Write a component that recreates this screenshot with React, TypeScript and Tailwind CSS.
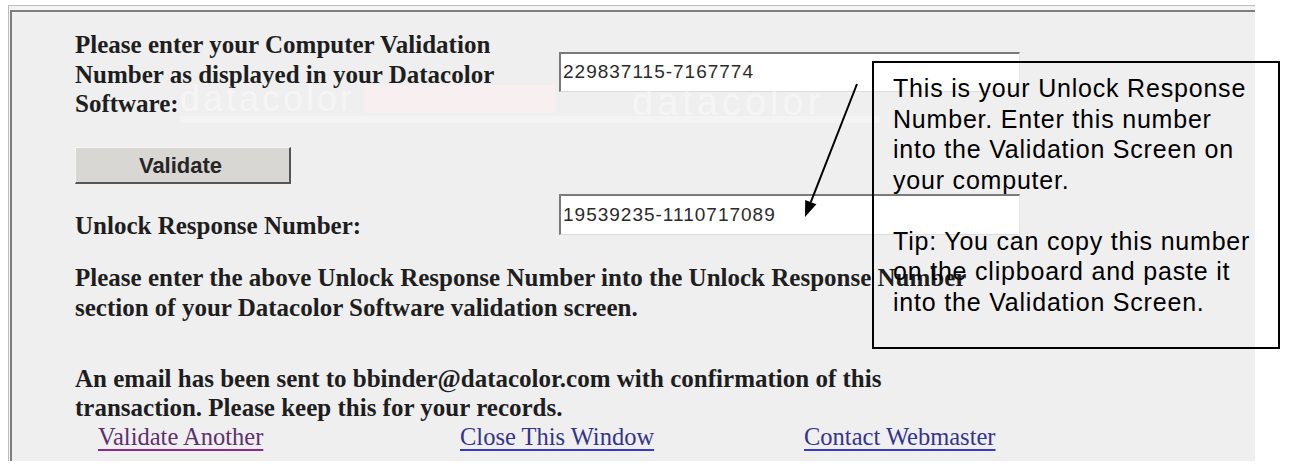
export default function App() {
  return (
    <div className="relative h-[467px] w-[1289px] overflow-hidden bg-white">
      {/* faint datacolor watermark in the page background */}
      <div className="pointer-events-none absolute left-[180px] top-[84px] flex items-center gap-[10px]">
        <span className="font-['Liberation_Sans',sans-serif] text-[36px] leading-[30px] tracking-[3px] text-white/40">datacolor</span>
        <span className="h-[28px] w-[190px] bg-[#fbeef0]/60" />
      </div>
      <div className="pointer-events-none absolute left-[632px] top-[88px] font-['Liberation_Sans',sans-serif] text-[38px] leading-[28px] tracking-[4px] text-white/40">
        datacolor
      </div>
      <div className="pointer-events-none absolute left-[180px] top-[116px] h-[7px] w-[700px] bg-white/30" />

      <div className="ml-[8px] mt-[5px] h-[456px] w-[1247px] border-l border-t border-[#bdbdbd] bg-[#f3f3f3] pl-[1px] pt-[4px]">
        <div className="h-full border-l-2 border-t-2 border-[#7d7d7d] bg-[#efefef] pl-[63px] pt-[18px] font-['Liberation_Serif',serif] text-[#1e1e1e]">
          <div className="flex items-start">
            <p className="w-[484px] whitespace-nowrap text-[25px] font-bold leading-[29.5px]">
              Please enter your Computer Validation
              <br />
              Number as displayed in your Datacolor
              <br />
              Software:
            </p>
            <Field value="229837115-7167774" className="mt-[22px] h-[40px]" />
          </div>

          <button className="mt-[28.5px] flex h-[37px] w-[216px] items-center justify-center border-b-2 border-l border-r-2 border-t border-b-[#555] border-l-[#f4f4f4] border-r-[#555] border-t-[#f4f4f4] bg-[#d9d7d3] pr-[4px] font-['Liberation_Sans',sans-serif] text-[22px] font-bold text-[#262626]">
            Validate
          </button>

          <div className="mt-[10px] flex items-start">
            <p className="w-[484px] pt-[17px] text-[25px] font-bold leading-[29.5px]">Unlock Response Number:</p>
            <Field value="19539235-1110717089" className="h-[41px]" />
          </div>

          <p className="mt-[22.5px] whitespace-nowrap text-[25px] font-bold leading-[30px]">
            Please enter the above Unlock Response Number into the Unlock Response Number
            <br />
            section of your Datacolor Software validation screen.
          </p>

          <p className="mt-[40.5px] whitespace-nowrap text-[25px] font-bold leading-[29px]">
            An email has been sent to bbinder@datacolor.com with confirmation of this
            <br />
            transaction. Please keep this for your records.
          </p>

          <div className="mt-[1.5px] grid grid-cols-[362px_344px_auto] pl-[23px] text-[24.5px] leading-[28px]">
            <a href="#" className="justify-self-start text-[#5e2f70] underline decoration-[#8a2a8a] underline-offset-[4px]">
              Validate Another
            </a>
            <a href="#" className="justify-self-start text-[#34348c] underline decoration-[#3a3ac0] underline-offset-[4px]">
              Close This Window
            </a>
            <a href="#" className="justify-self-start text-[#34348c] underline decoration-[#3a3ac0] underline-offset-[4px]">
              Contact Webmaster
            </a>
          </div>
        </div>
      </div>

      {/* annotation callout */}
      <div className="absolute left-[872px] top-[61px] h-[288px] w-[408px] border-2 border-black pl-[19px] pt-[10px] font-['Liberation_Sans',sans-serif] text-[25px] leading-[30.5px] tracking-[0.8px] text-black">
        <p>
          This is your Unlock Response
          <br />
          Number. Enter this number
          <br />
          into the Validation Screen on
          <br />
          your computer.
        </p>
        <p className="mt-[30.5px]">
          Tip: You can copy this number
          <br />
          on the clipboard and paste it
          <br />
          into the Validation Screen.
        </p>
      </div>

      <svg className="pointer-events-none absolute left-0 top-0" width="1289" height="467" viewBox="0 0 1289 467">
        <line x1="857" y1="84" x2="810.8" y2="202.1" stroke="#000" strokeWidth="2" />
        <polygon points="805,217 816.4,204.3 805.2,199.9" fill="#000" />
      </svg>
    </div>
  );
}

function Field({ value, className }: { value: string; className?: string }) {
  return (
    <div
      className={`flex w-[461px] items-center border-b border-l-2 border-r border-t-2 border-b-[#dcdcdc] border-l-[#7a7a7a] border-r-[#e4e4e4] border-t-[#7a7a7a] bg-white pl-[2px] font-['Liberation_Sans',sans-serif] text-[19px] tracking-[1px] text-[#2a2a2a] ${className ?? ''}`}
    >
      {value}
    </div>
  );
}
